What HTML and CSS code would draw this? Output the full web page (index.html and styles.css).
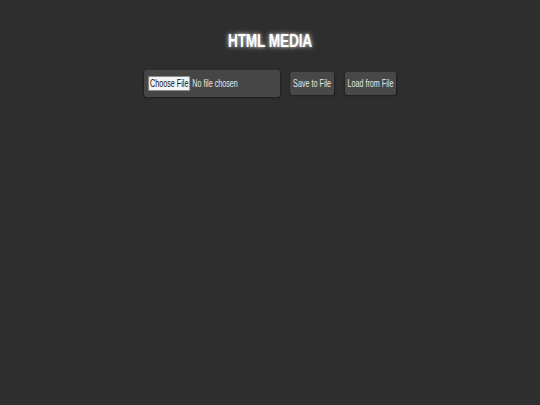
FILE: index.html
```html
<!DOCTYPE html>
<html>
<head>
<meta charset="utf-8">
<link rel="stylesheet" href="styles.css">
</head>
<body>
<div class="page">
  <h1 class="title">HTML MEDIA</h1>
  <div class="controls">
    <label class="file-box">
      <span class="choose">Choose File</span>
      <span class="chosen">No file chosen</span>
    </label>
    <button class="btn save">Save to File</button>
    <button class="btn load">Load from File</button>
  </div>
</div>
</body>
</html>
```
FILE: styles.css
```css
html, body {
  margin: 0;
  padding: 0;
  background: #2e2e2e;
  height: 100%;
}
.page {
  display: flex;
  flex-direction: column;
  align-items: center;
  font-family: "Liberation Sans", Arial, sans-serif;
  color: #fff;
  transform: scaleX(0.72);
  transform-origin: 270px 0;
}
.title {
  margin: 31px 0 0 0;
  font-size: 19px;
  line-height: 20px;
  font-weight: bold;
  letter-spacing: -0.2px;
  color: #fff;
  text-shadow: 0 0 4px rgba(255,255,255,0.8), 0 0 8px rgba(255,255,255,0.45);
}
.controls {
  display: flex;
  align-items: center;
  margin-top: 19px;
}
.file-box {
  display: flex;
  align-items: center;
  width: 189px;
  height: 27px;
  box-sizing: border-box;
  padding: 0 6px;
  background: #464646;
  border-radius: 3px;
  font-size: 10px;
  color: #e6e6e6;
  white-space: nowrap;
  box-shadow: 0 1px 2px rgba(0,0,0,0.35);
}
.choose {
  display: flex;
  align-items: center;
  justify-content: center;
  flex-shrink: 0;
  width: 58px;
  background: #f4f4f4;
  color: #111;
  border: 1px solid #8a8a8a;
  border-radius: 1px;
  height: 15px;
  box-sizing: border-box;
  margin-right: 3px;
}
.btn {
  height: 23px;
  padding: 0;
  background: #484848;
  color: #e6e6e6;
  border: none;
  border-radius: 3px;
  font-family: "Liberation Sans", Arial, sans-serif;
  font-size: 10px;
  white-space: nowrap;
  box-shadow: 0 1px 2px rgba(0,0,0,0.35);
}
.save {
  width: 61px;
  margin-left: 14px;
}
.load {
  width: 71px;
  margin-left: 15px;
}
```
